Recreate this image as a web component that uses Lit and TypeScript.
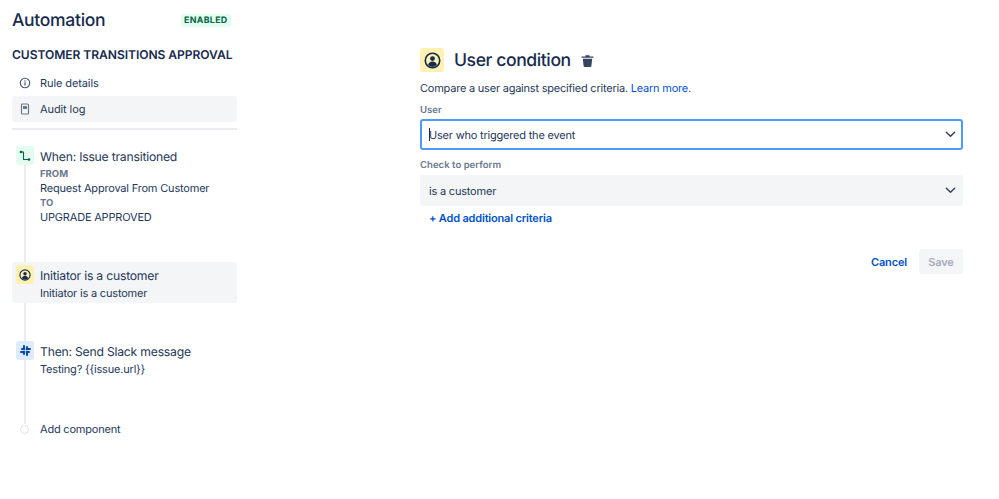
import { LitElement, html, css } from "lit";
import { customElement } from "lit/decorators.js";

const chevron = html`<svg class="chev" width="11" height="7" viewBox="0 0 11 7"><path d="M1.300 1.300 5.500 5.300l4.200-4" fill="none" stroke="#344563" stroke-width="1.500" stroke-linecap="round" stroke-linejoin="round"/></svg>`;

const userIcon = (s: number) => html`<svg width=${s} height=${s} viewBox="0 0 16 16"><circle cx="8" cy="8" r="6.800" fill="none" stroke="#172b4d" stroke-width="1.500"/><circle cx="8" cy="6.200" r="2.300" fill="#172b4d"/><path d="M3.900 12.300c.3-2 2-3.300 4.100-3.300s3.800 1.300 4.100 3.300A6 6 0 0 1 8 14a6 6 0 0 1-4.100-1.700z" fill="#172b4d"/></svg>`;

@customElement("app-root")
export class AppRoot extends LitElement {
  static styles = css`
    :host { display: block; width: 999px; height: 499px; background: #fff; overflow: hidden; font-family: Inter, "Liberation Sans", sans-serif; color: #172b4d; font-size: 12px; text-rendering: geometricPrecision; }
    .page { display: flex; height: 499px; }
    .side { width: 225px; margin-left: 12px; flex: none; display: flex; flex-direction: column; }
    .head { display: flex; align-items: center; height: 26px; margin-top: 7px; }
    .head h1 { margin: 0; font-size: 17.500px; font-weight: 500; letter-spacing: -0.3px; width: 169px; flex: none; }
    .loz { font-size: 8.800px; font-weight: 700; letter-spacing: 0.35px; color: #006644; background: #e3fcef; border-radius: 3px; height: 13px; line-height: 13px; padding: 0 3px; }
    .rule { margin: 14px 0 0; font-size: 12.100px; line-height: 16px; font-weight: 600; letter-spacing: -0.07px; white-space: nowrap; }
    .nav { display: flex; align-items: center; height: 26px; padding-left: 7px; gap: 9px; border-radius: 3px; font-size: 11px; letter-spacing: -0.1px; color: #253858; }
    .nav svg { width: 12px; flex: none; }
    .first { margin-top: 7px; }
    .on { background: #f4f5f7; }
    hr { border: 0; height: 2px; background: #ebecf0; margin: 6px 0 0; }
    .flow { position: relative; margin-top: 16px; display: flex; flex-direction: column; }
    .line { position: absolute; left: 12px; top: 18px; height: 260px; width: 2px; background: #ebecf0; }
    .step { position: relative; display: flex; gap: 6px; padding: 0 4px; border-radius: 3px; }
    .step.on { height: 41px; padding-top: 3px; box-sizing: border-box; margin-top: 38px; }
    .ico { width: 18px; height: 19px; border-radius: 3px; flex: none; display: flex; align-items: center; justify-content: center; }
    .body { display: flex; flex-direction: column; font-size: 11px; letter-spacing: -0.19px; color: #253858; }
    .t { font-size: 12.200px; letter-spacing: -0.22px; line-height: 20px; margin: 1px 0 -1px; color: #253858; white-space: nowrap; }
    .sub { line-height: 14.500px; margin-top: 1px; white-space: nowrap; }
    .cap { font-size: 9.500px; letter-spacing: 0; font-weight: 700; color: #6b778c; padding-top: 3px; line-height: 11.500px; }
    .add { display: flex; align-items: center; gap: 11px; padding-left: 8px; font-size: 11px; letter-spacing: -0.2px; color: #253858; margin-top: 44.500px; position: relative; line-height: 16px; }
    .dot { width: 7px; height: 7px; border: 1px solid #dfe1e6; border-radius: 50%; background: #fff; flex: none; }
    .main { margin-left: 183px; width: 543px; flex: none; display: flex; flex-direction: column; }
    .title { display: flex; align-items: center; margin-top: 48px; height: 24px; }
    .big { width: 24px; height: 24px; background: #fff0b3; border-radius: 3px; display: flex; align-items: center; justify-content: center; }
    .title h2 { margin: 0 10px 0 10px; font-size: 17.600px; font-weight: 500; letter-spacing: -0.42px; white-space: nowrap; }
    .desc { margin-top: 9px; line-height: 14px; font-size: 11px; letter-spacing: -0.22px; color: #253858; white-space: nowrap; }
    a { color: #0052cc; text-decoration: none; }
    .lbl { font-size: 9.600px; font-weight: 600; color: #6b778c; line-height: 12px; }
    .sel { box-sizing: border-box; height: 31px; border-radius: 3px; display: flex; align-items: center; justify-content: space-between; padding: 0 7px 0 9px; font-size: 11px; letter-spacing: -0.2px; color: #253858; background: #f4f5f7; }
    .sel.focus { background: #fff; border: 2px solid #4c9aff; padding: 0 5px 0 7px; }
    .caret { display: inline-block; width: 1px; height: 13px; background: #172b4d; margin-right: -1px; vertical-align: -2px; }
    .more { margin: 5px 0 0 9px; line-height: 14px; font-size: 11px; letter-spacing: -0.18px; font-weight: 600; color: #0052cc; }
    .acts { display: flex; justify-content: flex-end; align-items: center; gap: 12px; margin-top: 24px; font-size: 11px; letter-spacing: -0.15px; font-weight: 600; }
    .save { width: 44px; height: 25px; background: #f4f5f7; border-radius: 3px; color: #a5adba; display: flex; align-items: center; justify-content: center; }
  `;

  render() {
    return html`<div class="page">
      <div class="side">
        <div class="head"><h1>Automation</h1><span class="loz">ENABLED</span></div>
        <div class="rule">CUSTOMER TRANSITIONS APPROVAL</div>
        <div class="nav first">
          <svg height="12" viewBox="0 0 12 12"><circle cx="6" cy="6" r="4.700" fill="none" stroke="#42526e" stroke-width="1.100"/><rect x="5.400" y="5.300" width="1.200" height="3.200" fill="#42526e"/><rect x="5.400" y="3.300" width="1.200" height="1.200" fill="#42526e"/></svg>
          Rule details
        </div>
        <div class="nav on">
          <svg height="12" viewBox="0 0 12 12"><rect x="2.500" y="1" width="7" height="10" rx="1" fill="none" stroke="#6b778c" stroke-width="1.200"/><rect x="4" y="3" width="4" height="3" fill="#6b778c"/></svg>
          Audit log
        </div>
        <hr />
        <div class="flow">
          <div class="line"></div>
          <div class="step">
            <div class="ico" style="background:#e3fcef"><svg width="12" height="12" viewBox="0 0 12 12"><path d="M2 2h2.500v7.500H10" fill="none" stroke="#006644" stroke-width="1.100" stroke-linejoin="round"/><circle cx="2" cy="2" r="1.300" fill="#006644"/><circle cx="10" cy="9.500" r="1.300" fill="#006644"/></svg></div>
            <div class="body">
              <div class="t">When: Issue transitioned</div>
              <div class="cap">FROM</div>
              <div class="sub" style="margin-top:0">Request Approval From Customer</div>
              <div class="cap">TO</div>
              <div class="sub" style="margin-top:0">UPGRADE APPROVED</div>
            </div>
          </div>
          <div class="step on">
            <div class="ico" style="background:#fff0b3">${userIcon(12)}</div>
            <div class="body">
              <div class="t">Initiator is a customer</div>
              <div class="sub">Initiator is a customer</div>
            </div>
          </div>
          <div class="step" style="margin-top:38px">
            <div class="ico" style="background:#deebff"><svg width="11" height="11" viewBox="0 0 11 11" fill="none" stroke="#0747a6" stroke-width="2" stroke-linecap="round"><path d="M4 1v3.500M7 6.500V10M1 7h3.500M6.500 4H10M4 7v2M7 4V2M7 7h2M4 4H2"/></svg></div>
            <div class="body">
              <div class="t">Then: Send Slack message</div>
              <div class="sub">Testing? {{issue.url}}</div>
            </div>
          </div>
          <div class="add"><span class="dot"></span>Add component</div>
        </div>
      </div>
      <div class="main">
        <div class="title">
          <div class="big">${userIcon(17)}</div>
          <h2>User condition</h2>
          <svg width="13" height="13" viewBox="0 0 13 13"><path d="M0.500 2.500h12v1.300H.5zM4.500 1.200h4v1.300h-4zM1.800 4.800h9.400l-.8 7.200a1 1 0 0 1-1 .9H3.600a1 1 0 0 1-1-.9z" fill="#344563"/></svg>
        </div>
        <div class="desc">Compare a user against specified criteria. <a>Learn more.</a></div>
        <div class="lbl" style="margin-top:10px">User</div>
        <div class="sel focus" style="margin-top:2px"><span><span class="caret"></span>User who triggered the event</span>${chevron}</div>
        <div class="lbl" style="margin-top:10px">Check to perform</div>
        <div class="sel" style="margin-top:3px"><span>is a customer</span>${chevron}</div>
        <div class="more">+ Add additional criteria</div>
        <div class="acts"><a>Cancel</a><div class="save">Save</div></div>
      </div>
    </div>`;
  }
}
